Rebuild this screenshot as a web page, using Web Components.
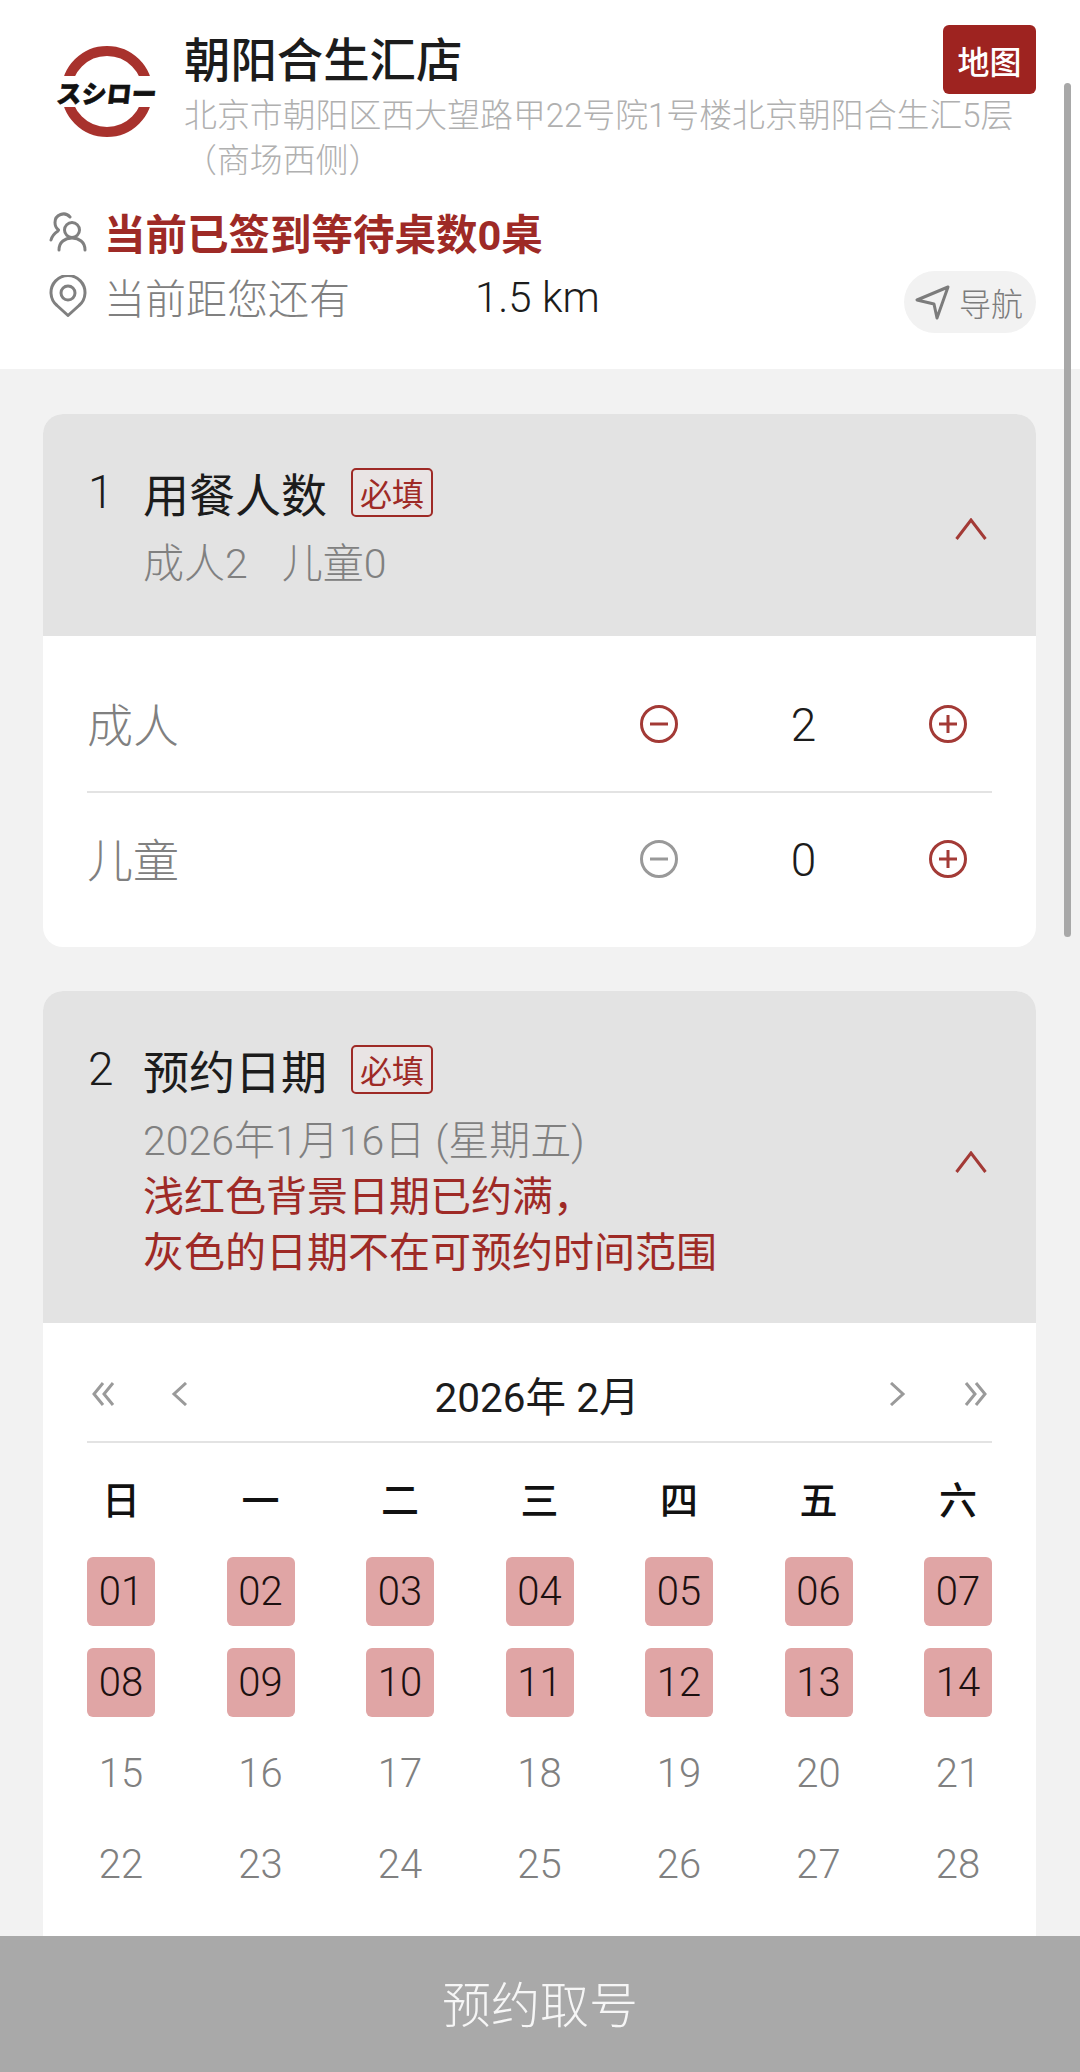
<!DOCTYPE html>
<html lang="zh-CN">
<head>
<meta charset="utf-8">
<title>预约取号</title>
<style>
    html, body { margin: 0; padding: 0; background: #f2f2f2; }
    body { font-family: Roboto, "Noto Sans CJK SC", sans-serif; font-weight: 300; }
</style>
</head>
<body>
<queue-app>
    <store-header></store-header>
    <section-card slot="cards" num="1" heading="用餐人数">
        <span slot="sub">成人2<span style="display:inline-block;width:34px"></span>儿童0</span>
        <counter-row label="成人" value="2"></counter-row>
        <counter-row label="儿童" value="0" low></counter-row>
    </section-card>
    <section-card slot="cards" num="2" heading="预约日期" tall>
        <span slot="sub">2026年1月16日 (星期五)</span>
        <span slot="note">浅红色背景日期已约满，<br>灰色的日期不在可预约时间范围</span>
        <month-calendar></month-calendar>
    </section-card>
    <footer-bar slot="footer">预约取号</footer-bar>
</queue-app>

<script>
const RED = '#9e2a26';
const GRAY = '#808080';

class QueueApp extends HTMLElement {
    constructor() {
        super();
        this.attachShadow({ mode: 'open' });
        this.shadowRoot.innerHTML = `
      <style>
        :host { display: flex; flex-direction: column; height: 100vh; overflow: hidden; position: relative; background: #f2f2f2; }
        .scroll { flex: 1; min-height: 0; overflow: hidden; }
        .cards { display: flex; flex-direction: column; gap: 44px; padding: 45px 44px 0 43px; }
        .bar { position: absolute; left: 1064px; top: 83px; width: 7px; height: 854px; border-radius: 4px; background: #a8a8a8; }
      </style>
      <div class="scroll">
        <slot></slot>
        <div class="cards"><slot name="cards"></slot></div>
      </div>
      <slot name="footer"></slot>
      <div class="bar"></div>
    `;
    }
}

class StoreHeader extends HTMLElement {
    constructor() {
        super();
        this.attachShadow({ mode: 'open' });
        this.shadowRoot.innerHTML = `
      <style>
        :host { display: block; background: #fff; padding: 25px 44px 36px 49px; height: 308px; }
        .top { display: flex; }
        .logo { display: grid; width: 116px; height: 136px; margin-right: 19px; place-items: center; flex: none; }
        .logo > * { grid-area: 1 / 1; }
        .logo span { font-family: "Noto Sans CJK JP", sans-serif; font-size: 25px; font-weight: 900; line-height: 26px; color: #111; white-space: nowrap; transform: skewX(-6deg); -webkit-text-stroke: 0.6px #111; margin-top: -2px; }
        .info { flex: 1; min-width: 0; }
        .title-row { display: flex; justify-content: space-between; align-items: flex-start; height: 68px; }
        h1 { margin: 10px 0 0; font-size: 46.400px; line-height: 52px; font-weight: 500; color: #1c1c1c; }
        .map { width: 93px; height: 69px; border-radius: 6px; background: #9e2320; color: #fff; font-size: 32px; font-weight: 500; display: flex; align-items: center; justify-content: center; }
        .addr { font-size: 32.900px; line-height: 45px; color: #b0b0b0; }
        .row { display: flex; align-items: center; }
        .wait { margin-top: 21px; height: 56px; font-size: 41.500px; font-weight: 700; color: ${RED}; }
        .dist { margin-top: 11px; height: 62px; align-items: flex-start; font-size: 41px; color: ${GRAY}; }
        .dist .line { display: flex; align-items: center; height: 50px; }
        .ico { width: 38px; margin-right: 17px; flex: none; display: block; }
        .km { margin-left: 125px; color: #1c1c1c; font-size: 42px; padding-top: 2px; }
        .nav { margin-left: auto; width: 132px; height: 62px; border-radius: 31px; background: #f2f2f2; display: flex; align-items: center; font-size: 32px; color: #7c7c7c; }
        .nav svg { margin: 0 9px 0 10px; display: block; flex: none; }
      </style>
      <div class="top">
        <div class="logo">
          <svg width="116" height="136" viewBox="0 0 116 136">
            <circle cx="58" cy="66.500" r="40.500" fill="none" stroke="#a8322d" stroke-width="10"/>
            <rect x="0" y="51" width="116" height="31" fill="#fff"/>
          </svg>
          <span>スシロー</span>
        </div>
        <div class="info">
          <div class="title-row">
            <h1>朝阳合生汇店</h1>
            <div class="map">地图</div>
          </div>
          <div class="addr">北京市朝阳区西大望路甲22号院1号楼北京朝阳合生汇5层（商场西侧）</div>
        </div>
      </div>
      <div class="row wait">
        <svg class="ico" width="38" height="42" viewBox="0 0 38 42" fill="none" stroke="${GRAY}" stroke-width="3" stroke-linecap="round">
          <circle cx="23" cy="19" r="7.500"/>
          <path d="M10 39c0-8 6-12 13-12s13 4 13 12"/>
          <path d="M21 6a8.500 8.500 0 0 0-15 5.500c0 3.500 1.500 6 3.500 7.500M9 20c-3 2-6 5-7 9"/>
        </svg>
        <span>当前已签到等待桌数0桌</span>
      </div>
      <div class="row dist">
        <div class="line">
          <svg class="ico" width="38" height="42" viewBox="0 0 38 42" fill="none" stroke="${GRAY}" stroke-width="3" stroke-linejoin="round">
            <path d="M19 40.500L8 30.500A17 17 0 1 1 30 30.500Z"/>
            <circle cx="19" cy="18" r="7"/>
          </svg>
          <span>当前距您还有</span>
          <span class="km">1.5 km</span>
        </div>
        <div class="nav">
          <svg width="36" height="36" viewBox="0 0 36 36" fill="none" stroke="#7c7c7c" stroke-width="3" stroke-linejoin="round">
            <path d="M34 3L3 16l17 4 3 14z"/>
          </svg>
          <span>导航</span>
        </div>
      </div>
    `;
    }
}

class SectionCard extends HTMLElement {
    constructor() {
        super();
        this.attachShadow({ mode: 'open' });
    }

    connectedCallback() {
        const num = this.getAttribute('num');
        const heading = this.getAttribute('heading');
        this.shadowRoot.innerHTML = `
      <style>
        :host { display: block; background: #fff; border-radius: 20px; overflow: hidden; }
        header { background: #e3e3e3; padding: 48px 49px 44px 45px; display: flex; align-items: center; }
        :host([tall]) header { padding-bottom: 42px; }
        .text { flex: 1; min-width: 0; }
        .title { display: flex; align-items: center; height: 60px; font-size: 46px; font-weight: 400; color: #1c1c1c; }
        .num { width: 55px; flex: none; font-weight: 300; }
        .tag { margin-left: 24px; width: 82px; height: 49px; box-sizing: border-box; border: 2.500px solid ${RED}; border-radius: 5px; background: #e9e4e4; color: ${RED}; font-size: 32px; display: flex; align-items: center; justify-content: center; }
        .sub { margin: 14px 0 0 55px; font-size: 41px; line-height: 56px; color: ${GRAY}; }
        .note { margin-left: 55px; font-size: 41px; line-height: 56px; font-weight: 400; color: ${RED}; display: block; }
        svg { display: block; flex: none; margin-top: 4px; }
      </style>
      <header>
        <div class="text">
          <div class="title"><span class="num">${num}</span><span>${heading}</span><span class="tag">必填</span></div>
          <div class="sub"><slot name="sub"></slot></div>
          <div class="note"><slot name="note"></slot></div>
        </div>
        <svg width="32" height="22" viewBox="0 0 32 22" fill="none" stroke="#a33a36" stroke-width="3"><path d="M1.500 21L16 2l14.500 19"/></svg>
      </header>
      <slot></slot>
    `;
    }
}

class CounterRow extends HTMLElement {
    constructor() {
        super();
        this.attachShadow({ mode: 'open' });
    }

    connectedCallback() {
        const low = this.hasAttribute('low');
        const minus = low ? '#999' : '#a33a36';
        const circle = (color, bar) => `
          <svg width="38" height="38" viewBox="0 0 38 38" fill="none" stroke="${color}" stroke-width="3">
            <circle cx="19" cy="19" r="17.500"/>${bar}
          </svg>`;
        this.shadowRoot.innerHTML = `
      <style>
        :host { display: block; margin: 0 44px; }
        .row { display: flex; align-items: center; height: 134px; padding-right: 25px; font-size: 46px; }
        :host(:first-of-type) .row { margin-top: 21px; border-bottom: 2px solid #e3e3e3; }
        :host(:last-of-type) .row { height: 132px; padding-bottom: 22px; }
        .label { flex: 1; color: ${GRAY}; margin-top: -4px; }
        .value { width: 251px; text-align: center; color: #1c1c1c; padding-top: 2px; }
        svg { display: block; flex: none; }
      </style>
      <div class="row">
        <span class="label">${this.getAttribute('label')}</span>
        ${circle(minus, '<path d="M10 19h18"/>')}
        <span class="value">${this.getAttribute('value')}</span>
        ${circle('#a33a36', '<path d="M10 19h18M19 10v18"/>')}
      </div>
    `;
    }
}

class MonthCalendar extends HTMLElement {
    constructor() {
        super();
        this.attachShadow({ mode: 'open' });
        const week = ['日', '一', '二', '三', '四', '五', '六'].map(d => `<span>${d}</span>`).join('');
        let days = '';
        for (let d = 1; d <= 28; d++) {
            const txt = String(d).padStart(2, '0');
            days += `<span class="${d <= 14 ? 'full' : 'off'}">${txt}</span>`;
        }
        const stroke = 'fill="none" stroke="#9a9a9a" stroke-width="3"';
        this.shadowRoot.innerHTML = `
      <style>
        :host { display: block; padding: 24px 44px 70px; }
        .nav { display: grid; grid-template-columns: 1fr auto 1fr; align-items: center; height: 94px; border-bottom: 2px solid #e3e3e3; }
        .side { display: flex; align-items: center; gap: 55px; padding: 0 5px; }
        .side.right { justify-content: flex-end; gap: 57px; }
        .month { font-size: 40.500px; font-weight: 400; color: #1c1c1c; margin-right: 5px; white-space: pre; }
        svg { display: block; }
        .grid { display: grid; grid-template-columns: repeat(7, 68px); justify-content: space-between; }
        .week { box-sizing: border-box; height: 114px; padding-bottom: 6px; align-items: center; font-size: 38px; font-weight: 500; color: #111; text-align: center; }
        .days { grid-auto-rows: 68.500px; row-gap: 22.500px; font-size: 40px; text-align: center; line-height: 69px; }
        .full { background: #e0a5a5; border-radius: 6px; color: #1c1010; }
        .off { color: ${GRAY}; }
      </style>
      <div class="nav">
        <div class="side">
          <svg width="24" height="24" viewBox="0 0 24 24" ${stroke}><path d="M11 1L2 12l9 11M21 1l-9 11 9 11"/></svg>
          <svg width="17" height="24" viewBox="0 0 17 24" ${stroke}><path d="M15 1L3 12l12 11"/></svg>
        </div>
        <div class="month">2026年 2月</div>
        <div class="side right">
          <svg width="17" height="24" viewBox="0 0 17 24" ${stroke}><path d="M2 1l12 11L2 23"/></svg>
          <svg width="24" height="24" viewBox="0 0 24 24" ${stroke}><path d="M3 1l9 11-9 11M13 1l9 11-9 11"/></svg>
        </div>
      </div>
      <div class="grid week">${week}</div>
      <div class="grid days">${days}</div>
    `;
    }
}

class FooterBar extends HTMLElement {
    constructor() {
        super();
        this.attachShadow({ mode: 'open' });
        this.shadowRoot.innerHTML = `
      <style>
        :host { display: flex; align-items: center; justify-content: center; flex: none; box-sizing: border-box; height: 136px; padding-bottom: 6px; background: #a9a9a9; color: #f6f6f6; font-size: 49px; position: relative; }
      </style>
      <slot></slot>
    `;
    }
}

customElements.define('queue-app', QueueApp);
customElements.define('store-header', StoreHeader);
customElements.define('section-card', SectionCard);
customElements.define('counter-row', CounterRow);
customElements.define('month-calendar', MonthCalendar);
customElements.define('footer-bar', FooterBar);
</script>
</body>
</html>
